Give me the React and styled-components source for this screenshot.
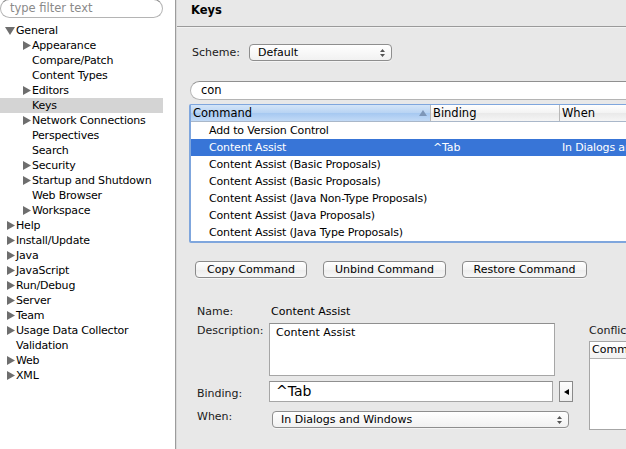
import React from 'react';
import styled, { createGlobalStyle } from 'styled-components';

const FONT = '"DejaVu Sans", "Liberation Sans", sans-serif';

const Global = createGlobalStyle`
  html, body { margin: 0; padding: 0; background: #e8e8e8; }
  body { font-family: ${FONT}; font-size: 11px; color: #000; }
`;

const Window = styled.div`
  display: flex;
  width: 626px;
  height: 449px;
  overflow: hidden;
`;

const Sidebar = styled.div`
  width: 175px;
  flex: none;
  background: #fff;
  border-right: 1px solid #9c9c9c;
  display: flex;
  flex-direction: column;
`;

const Filter = styled.div`
  width: 163px;
  height: 19px;
  box-sizing: border-box;
  margin-top: -1px;
  border: 1px solid #b4b4b4;
  border-top-color: #8e8e8e;
  border-radius: 10px;
  padding-left: 9px;
  line-height: 17px;
  color: #8a8a8a;
  font-size: 11.5px;
`;

const Tree = styled.div`
  margin-top: 5px;
  width: 163px;
`;

const Node = styled.div`
  height: 15px;
  line-height: 15px;
  display: flex;
  align-items: center;
  padding-left: ${p => p.$level * 16}px;
  background: ${p => (p.$selected ? '#d4d4d4' : 'transparent')};
  white-space: nowrap;
  letter-spacing: -0.2px;
`;

const Twisty = styled.span`
  width: 16px;
  flex: none;
  display: flex;
  justify-content: flex-end;
  padding-right: 1px;
  box-sizing: border-box;
`;

const Arrow = ({ open }) =>
  open ? (
    <svg width="10" height="8" viewBox="0 0 10 8"><path d="M0 0h10L5 8z" fill="#6e6e6e" /></svg>
  ) : (
    <svg width="8" height="9" viewBox="0 0 8 9"><path d="M0 0l8 4.5L0 9z" fill="#6e6e6e" /></svg>
  );

const Main = styled.div`
  flex: 1;
  min-width: 0;
  overflow: hidden;
  background: #e8e8e8;
  border-left: 1px solid #d8d8d8;
`;

const Header = styled.div`
  height: 26px;
  line-height: 20px;
  padding-left: 14px;
  font-weight: bold;
  font-size: 11.5px;
  border-bottom: 1px solid #9a9a9a;
  box-shadow: 0 1px 0 #f2f2f2;
`;

const Body = styled.div`
  padding: 17px 0 0 13px;
  width: 470px;
`;

const SchemeRow = styled.div`
  display: flex;
  align-items: center;
  gap: 9px;
  padding-left: 2px;
`;

const Select = styled.div`
  width: ${p => p.$w}px;
  height: 17px;
  box-sizing: border-box;
  border: 1px solid #8e8e8e;
  border-radius: 4px;
  background: linear-gradient(#ffffff, #f1f1f1);
  box-shadow: 0 1px 0 #f4f4f4;
  display: flex;
  align-items: center;
  justify-content: space-between;
  padding: 0 6px 0 8px;
  margin-left: ${p => p.$ml || 0}px;
  margin-top: ${p => p.$mt || 0}px;
`;

const Updown = () => (
  <svg width="5" height="8" viewBox="0 0 5 8">
    <path d="M0 3h5L2.5 0z M0 5h5L2.5 8z" fill="#555" />
  </svg>
);

const SearchField = styled.div`
  margin-top: 20px;
  height: 19px;
  box-sizing: border-box;
  border: 1px solid #b4b4b4;
  border-top-color: #909090;
  border-radius: 10px;
  background: #fff;
  padding-left: 10px;
  line-height: 17px;
  font-size: 11.5px;
`;

const Table = styled.div`
  margin-top: 4px;
  margin-left: -1px;
  height: 139px;
  box-sizing: border-box;
  border: 2px solid #7fa6dd;
  border-top-width: 1px;
  border-radius: 2px;
  background: #fff;
  overflow: hidden;
`;

const HeadRow = styled.div`
  display: grid;
  grid-template-columns: 239px 129px 1fr;
  height: 16px;
  border-bottom: 1px solid #a9b7c9;
`;

const HeadCell = styled.div`
  display: flex;
  align-items: center;
  justify-content: space-between;
  padding: 0 3px 0 2px;
  line-height: 16px;
  font-size: 11.5px;
  background: ${p => (p.$sorted
    ? 'linear-gradient(#d4e5f8, #b8d3f3 50%, #a6c8f1 51%, #c2daf6)'
    : 'linear-gradient(#ffffff, #f3f3f3 50%, #e9e9e9 51%, #f5f5f5)')};
  border-left: ${p => (p.$first ? 'none' : '1px solid #b8b8b8')};
`;

const Row = styled.div`
  display: grid;
  grid-template-columns: 239px 129px 1fr;
  height: 17px;
  line-height: 17px;
  font-size: 11px;
  letter-spacing: -0.15px;
  white-space: nowrap;
  background: ${p => (p.$selected ? '#3875d7' : '#fff')};
  color: ${p => (p.$selected ? '#fff' : '#000')};
`;

const Cell = styled.div`
  padding-left: ${p => p.$pl}px;
  overflow: hidden;
`;

const ButtonRow = styled.div`
  display: flex;
  gap: 16px;
  margin-top: 18px;
  padding-left: 5px;
`;

const Button = styled.div`
  width: ${p => p.$w}px;
  height: 17px;
  box-sizing: border-box;
  border: 1px solid #8a8a8a;
  border-radius: 4px;
  background: linear-gradient(#ffffff, #f4f4f4 50%, #ececec 51%, #f7f7f7);
  box-shadow: 0 1px 0 #f6f6f6;
  text-align: center;
  line-height: 15px;
  font-size: 11px;
`;

const Details = styled.div`
  display: flex;
  margin-top: 26px;
  padding-left: 7px;
`;

const Form = styled.div`
  display: grid;
  grid-template-columns: 72px 306px;
  grid-template-rows: 14px 53px 21px 17px;
  row-gap: 5px;
  align-items: start;
`;

const Label = styled.div`
  line-height: 15px;
  font-size: 11px;
  color: #1a1a1a;
  white-space: nowrap;
  margin-top: ${p => p.$mt || 0}px;
`;

const Value = styled.div`
  line-height: 15px;
  font-size: 11px;
  padding-left: 2px;
`;

const TextBox = styled.div`
  width: ${p => p.$w}px;
  height: ${p => p.$h}px;
  box-sizing: border-box;
  border: 1px solid #a6a6a6;
  border-top-color: #8f8f8f;
  background: #fff;
  padding: 1px 6px;
  font-size: ${p => p.$fs || 11}px;
  line-height: ${p => p.$lh || 15}px;
`;

const BindRow = styled.div`
  display: flex;
  gap: 6px;
`;

const SmallButton = styled.div`
  width: 14px;
  height: 21px;
  box-sizing: border-box;
  border: 1px solid #8a8a8a;
  background: linear-gradient(#fdfdfd, #ededed);
  display: flex;
  align-items: center;
  justify-content: center;
`;

const Conflicts = styled.div`
  margin: 19px 0 0 14px;
  width: 60px;
  flex: none;
  overflow: hidden;
`;

const ConflictTable = styled.div`
  margin-top: 3px;
  height: 89px;
  box-sizing: border-box;
  border: 1px solid #a6a6a6;
  background: #fff;
`;

const ConflictHead = styled.div`
  height: 16px;
  line-height: 15px;
  padding-left: 2px;
  font-size: 11px;
  border-bottom: 1px solid #b0b0b0;
  background: linear-gradient(#ffffff, #f1f1f1);
  white-space: nowrap;
`;

const tree = [
  { label: 'General', level: 0, arrow: 'open' },
  { label: 'Appearance', level: 1, arrow: 'closed' },
  { label: 'Compare/Patch', level: 1 },
  { label: 'Content Types', level: 1 },
  { label: 'Editors', level: 1, arrow: 'closed' },
  { label: 'Keys', level: 1, selected: true },
  { label: 'Network Connections', level: 1, arrow: 'closed' },
  { label: 'Perspectives', level: 1 },
  { label: 'Search', level: 1 },
  { label: 'Security', level: 1, arrow: 'closed' },
  { label: 'Startup and Shutdown', level: 1, arrow: 'closed' },
  { label: 'Web Browser', level: 1 },
  { label: 'Workspace', level: 1, arrow: 'closed' },
  { label: 'Help', level: 0, arrow: 'closed' },
  { label: 'Install/Update', level: 0, arrow: 'closed' },
  { label: 'Java', level: 0, arrow: 'closed' },
  { label: 'JavaScript', level: 0, arrow: 'closed' },
  { label: 'Run/Debug', level: 0, arrow: 'closed' },
  { label: 'Server', level: 0, arrow: 'closed' },
  { label: 'Team', level: 0, arrow: 'closed' },
  { label: 'Usage Data Collector', level: 0, arrow: 'closed' },
  { label: 'Validation', level: 0 },
  { label: 'Web', level: 0, arrow: 'closed' },
  { label: 'XML', level: 0, arrow: 'closed' },
];

const commands = [
  { name: 'Add to Version Control' },
  { name: 'Content Assist', binding: '^Tab', when: 'In Dialogs and Windows', selected: true },
  { name: 'Content Assist (Basic Proposals)' },
  { name: 'Content Assist (Basic Proposals)' },
  { name: 'Content Assist (Java Non-Type Proposals)' },
  { name: 'Content Assist (Java Proposals)' },
  { name: 'Content Assist (Java Type Proposals)' },
];

export default function App() {
  return (
    <Window>
      <Global />
      <Sidebar>
        <Filter>type filter text</Filter>
        <Tree>
          {tree.map((n, i) => (
            <Node key={i} $level={n.level} $selected={n.selected}>
              <Twisty>{n.arrow && <Arrow open={n.arrow === 'open'} />}</Twisty>
              {n.label}
            </Node>
          ))}
        </Tree>
      </Sidebar>
      <Main>
        <Header>Keys</Header>
        <Body>
          <SchemeRow>
            <Label>Scheme:</Label>
            <Select $w={143}>Default<Updown /></Select>
          </SchemeRow>
          <SearchField>con</SearchField>
          <Table>
            <HeadRow>
              <HeadCell $sorted $first>
                Command
                <svg width="8" height="6" viewBox="0 0 8 6"><path d="M0 6h8L4 0z" fill="#7d96b8" /></svg>
              </HeadCell>
              <HeadCell>Binding</HeadCell>
              <HeadCell>When</HeadCell>
            </HeadRow>
            {commands.map((c, i) => (
              <Row key={i} $selected={c.selected}>
                <Cell $pl={18}>{c.name}</Cell>
                <Cell $pl={3}>{c.binding}</Cell>
                <Cell $pl={3}>{c.when}</Cell>
              </Row>
            ))}
          </Table>
          <ButtonRow>
            <Button $w={112}>Copy Command</Button>
            <Button $w={123}>Unbind Command</Button>
            <Button $w={125}>Restore Command</Button>
          </ButtonRow>
          <Details>
            <Form>
              <Label>Name:</Label>
              <Value>Content Assist</Value>
              <Label>Description:</Label>
              <TextBox $w={286} $h={53}>Content Assist</TextBox>
              <Label $mt={5}>Binding:</Label>
              <BindRow>
                <TextBox $w={284} $h={21} $fs={14} $lh={17}>^Tab</TextBox>
                <SmallButton>
                  <svg width="5" height="6" viewBox="0 0 5 6"><path d="M5 0v6L0 3z" fill="#000" /></svg>
                </SmallButton>
              </BindRow>
              <Label $mt={2}>When:</Label>
              <Select $w={297} $ml={3} $mt={4}>In Dialogs and Windows<Updown /></Select>
            </Form>
            <Conflicts>
              <Label>Conflicts:</Label>
              <ConflictTable>
                <ConflictHead>Command</ConflictHead>
              </ConflictTable>
            </Conflicts>
          </Details>
        </Body>
      </Main>
    </Window>
  );
}
